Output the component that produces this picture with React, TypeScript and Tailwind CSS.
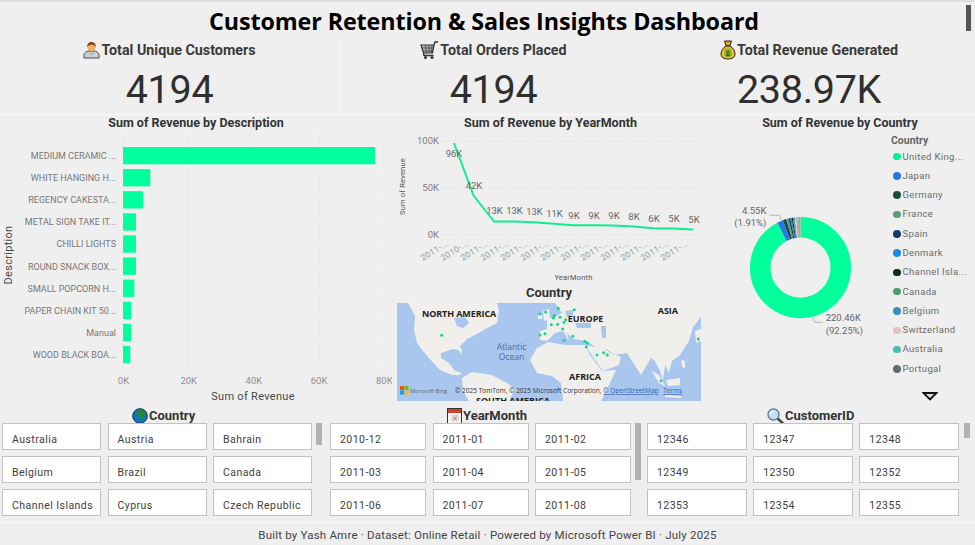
const din = "font-['Roboto',sans-serif]";

function PersonIcon() {
  return (
    <svg width="17" height="18" viewBox="0 0 18 19" className="shrink-0">
      <path d="M1 18v-3c0-3 3-4 5-4.500h6c2 .5 5 1.500 5 4.500v3z" fill="#c9ced3" stroke="#444" strokeWidth="1" />
      <path d="M7 11l2 3 2-3z" fill="#fff" stroke="#555" strokeWidth=".6" />
      <circle cx="9" cy="6.500" r="4" fill="#f2b060" />
      <path d="M4.500 7C4 2.500 6.500 1 9 1s5 1.500 4.500 6c-.8-2-2-3-4.500-3S5.300 5 4.500 7z" fill="#8a4a12" />
    </svg>
  );
}

function CartIcon() {
  return (
    <svg width="19" height="19" viewBox="0 0 19 19" className="shrink-0">
      <path d="M1 4h13l-1.500 8h-9z" fill="#b9bec3" stroke="#333" strokeWidth="1.200" />
      <path d="M2 7h12M2.700 10h10.500M5.500 4l.8 8M9 4v8M12 4l-.5 8" stroke="#333" strokeWidth=".8" />
      <path d="M14 4l1-3h3M3.500 12l.5 2.500h9.500" fill="none" stroke="#333" strokeWidth="1.400" />
      <circle cx="5.500" cy="16.500" r="1.500" fill="#333" />
      <circle cx="12" cy="16.500" r="1.500" fill="#333" />
    </svg>
  );
}

function BagIcon() {
  return (
    <svg width="16" height="20" viewBox="0 0 16 20" className="shrink-0">
      <path d="M4.500 1h7L10 5.500H6z" fill="#f0a818" stroke="#222" strokeWidth="1" />
      <path d="M6 6h4c3 1.500 5 5 5 8 0 3.500-3 5-7 5s-7-1.500-7-5c0-3 2-6.500 5-8z" fill="#f5b921" stroke="#222" strokeWidth="1" />
      <rect x="4.500" y="8.500" width="7" height="8.500" rx="1.500" fill="#7fb83a" />
      <text x="8" y="15.500" textAnchor="middle" fontSize="7.500" fontWeight="700" fill="#24491a" fontFamily="Roboto, sans-serif">$</text>
    </svg>
  );
}

function GlobeIcon() {
  return (
    <svg width="16" height="16" viewBox="0 0 16 16" className="shrink-0">
      <circle cx="8" cy="8" r="7.300" fill="#1672c4" stroke="#0c2f4f" strokeWidth="1" />
      <path d="M6 1.500c3-1 6 .5 7.500 3 .8 2-.5 4-2.500 5-.5 1.500-1.500 2.500-2.500 3-.5-1.500-.5-3-1.500-4-2-.2-3-1.500-2.500-3 .5-1 1.500-1.500 1.500-4z" fill="#1f8a3c" />
    </svg>
  );
}

function CalendarIcon() {
  return (
    <svg width="15" height="16" viewBox="0 0 15 16" className="shrink-0">
      <rect x=".5" y=".5" width="14" height="15" fill="#f4f2f0" stroke="#333" strokeWidth="1" />
      <rect x="1" y="1" width="13" height="4" fill="#c8432f" />
      <path d="M4 8h8M4 10h8M4 12h8M6.500 7v6.500M9.500 7v6.500" stroke="#bbb" strokeWidth=".7" />
      <rect x="7" y="9.500" width="2" height="2" fill="#d9776a" />
    </svg>
  );
}

function SearchIcon() {
  return (
    <svg width="17" height="16" viewBox="0 0 17 16" className="shrink-0">
      <path d="M10 10l5.500 5" stroke="#444" strokeWidth="2.400" strokeLinecap="round" />
      <circle cx="6.500" cy="6.500" r="5.500" fill="#bfe0f5" stroke="#6a7f8f" strokeWidth="1.400" />
      <path d="M3.500 6c0-1.500 1.200-2.700 2.700-2.700" fill="none" stroke="#fff" strokeWidth="1.200" />
    </svg>
  );
}

function Kpi({ icon, label, value, width }: { icon: React.ReactNode; label: string; value: string; width: string }) {
  return (
    <div className={"flex flex-col items-center " + width}>
      <div className="flex h-[20px] items-center gap-[1px]">
        {icon}
        <span className="text-[14.300px] leading-[20px] font-bold text-[#3a3a3a]">{label}</span>
      </div>
      <div className="mt-[6px] text-[39.500px] leading-[48px] tracking-[-0.3px] text-[#2f2f2f]">{value}</div>
    </div>
  );
}

const bars = [
  { label: "MEDIUM CERAMIC ...", value: 252 },
  { label: "WHITE HANGING H...", value: 27.3 },
  { label: "REGENCY CAKESTA...", value: 20 },
  { label: "METAL SIGN TAKE IT...", value: 13 },
  { label: "CHILLI LIGHTS", value: 13 },
  { label: "ROUND SNACK BOX...", value: 13 },
  { label: "SMALL POPCORN H...", value: 11.3 },
  { label: "PAPER CHAIN KIT 50...", value: 8.3 },
  { label: "Manual", value: 8.3 },
  { label: "WOOD BLACK BOA...", value: 7.3 },
];

function BarChart() {
  return (
    <svg width="392" height="276" viewBox="0 0 392 276" fontFamily="Roboto, sans-serif">
      {[123, 188.5, 253.5, 319, 384].map((x) => (
        <line key={x} x1={x} x2={x} y1="5" y2="239" stroke="#dcdcdc" strokeDasharray="1 2" />
      ))}
      {bars.map((b, i) => (
        <g key={b.label}>
          <rect x="123" y={18 + i * 22.1} width={b.value} height="17.300" fill="#01ff9c" />
          <text x="116" y={30 + i * 22.1} textAnchor="end" fontSize="9" fill="#777">{b.label}</text>
        </g>
      ))}
      {["0K", "20K", "40K", "60K", "80K"].map((t, i) => (
        <text key={t} x={123.500 + i * 65.2} y="255" textAnchor="middle" fontSize="9.500" fill="#8f8f8f">{t}</text>
      ))}
      <text x="253" y="270.500" textAnchor="middle" fontSize="11" letterSpacing=".3" fill="#4a4a4a">Sum of Revenue</text>
      <text transform="translate(12 126) rotate(-90)" textAnchor="middle" fontSize="11" letterSpacing=".3" fill="#4a4a4a">Description</text>
    </svg>
  );
}

const linePts = [
  [64, 32.500], [83.500, 85], [104, 111], [124, 111], [144, 111.700], [164, 113.300], [183.300, 114.700],
  [203.300, 114.700], [223.300, 115], [243.300, 116], [263.300, 117.700], [283.300, 118], [303.300, 119],
];
const lineLabels: [string, number, number][] = [
  ["96K", 64, 46.500], ["42K", 84, 78], ["13K", 104.500, 103.500], ["13K", 124.500, 103.500], ["13K", 144.500, 104.500],
  ["11K", 164.500, 106], ["9K", 184, 108], ["9K", 204, 108], ["9K", 224, 108], ["8K", 244, 109],
  ["6K", 264, 111], ["5K", 284, 111], ["5K", 304, 112],
];

function LineChart() {
  return (
    <svg width="316" height="155" viewBox="0 0 316 155" fontFamily="Roboto, sans-serif" className="overflow-visible">
      <g transform="translate(-2 -18.500)">
        {[30.700, 77.300, 124].map((y) => (
          <line key={y} x1="50" x2="310" y1={y} y2={y} stroke="#d8d8d8" strokeDasharray="1 2" />
        ))}
        {[["100K", 33.500], ["50K", 80], ["0K", 127]].map(([t, y]) => (
          <text key={t} x="49" y={y} textAnchor="end" fontSize="9.500" fill="#7d7d7d">{t}</text>
        ))}
        <polyline points={linePts.map((p) => p.join(",")).join(" ")} fill="none" stroke="#12ec90" strokeWidth="2" strokeLinejoin="round" />
        {lineLabels.map(([t, x, y], i) => (
          <text key={i} x={x} y={y} textAnchor="middle" fontSize="9.500" fill="#666">{t}</text>
        ))}
        {["2011-...", "2010-...", "2011-...", "2011-...", "2011-...", "2011-...", "2011-...", "2011-...", "2011-...", "2011-...", "2011-...", "2011-...", "2011-..."].map((t, i) => (
          <text key={i} transform={`translate(${46 + i * 20} 142.500) rotate(-32)`} textAnchor="middle" fontSize="8.500" letterSpacing=".3" fill="#9a9a9a">{t}</text>
        ))}
        <text x="183.500" y="169" textAnchor="middle" fontSize="7.500" letterSpacing=".2" fill="#555">YearMonth</text>
        <text transform="translate(15 76) rotate(-90)" textAnchor="middle" fontSize="7.500" letterSpacing=".2" fill="#555">Sum of Revenue</text>
      </g>
    </svg>
  );
}

const pins = [
  [143, 11], [148.7, 9], [161.3, 5.3], [177.3, 6.7], [156.3, 15], [157.3, 12.7], [163, 14.3], [168.7, 16.7], [167, 19.3],
  [154.3, 21.7], [160.7, 21.3], [165.7, 26], [143, 32], [148, 30.7], [167, 37.3], [175.7, 33.3], [187.7, 38.3], [190.3, 40],
  [189.3, 44], [200, 52], [206.7, 49.7], [210.3, 52], [44.7, 32.3], [301.3, 36], [264, 77.7],
];

function WorldMap() {
  const land = "#f0efeb";
  const water = "#a9c6ee";
  return (
    <svg width="304" height="98" viewBox="0 0 304 98" className="block" fontFamily="'Open Sans', sans-serif">
      <rect width="304" height="98" fill={water} />
      {/* north america */}
      <path d="M11 0H100L102 8L100 20L88 26L82 30L70 36L63 43L65 47L64 52L62 47L56 46L50 48L44 50L44 55L52 60L58 68L65 70L62 72L55 72L43 67L30 53L20 40L17 27L18 13Z" fill={land} />
      <path d="M57 15L68 14L72 20L66 25L60 23Z" fill={water} />
      {/* south america */}
      <path d="M65 75L75 69L95 72L110 80L118 86L112 98H72L66 88Z" fill={land} />
      {/* europe and asia */}
      <path d="M158 0H304V14L296 24L292 38L283 52L275 58L272 70L268 62L266 76L268 84L263 68L258 58L254 55L244 72L235 58L230 50L218 52L209 46L204 48L190 38L176 36L170 30L172 38L166 28L158 30L150 38L143 37L143 28L150 26L150 16L158 14L165 10Z" fill={land} />
      <path d="M146 8L152 6L153 16L147 18Z" fill={land} />
      <path d="M141 12L145 11L145 16L141 16Z" fill={land} />
      {/* inland seas */}
      <path d="M168 8L176 7L176 14L170 14Z" fill={water} />
      <path d="M178 20L194 20L194 25L180 25Z" fill={water} />
      <path d="M204 23L209 23L209 35L205 35Z" fill={water} />
      {/* africa */}
      <path d="M133 57L140 45L151 39L168 42L188 42L193 52L205 68L219 67L212 82L204 98H166L164 80L155 73L140 70Z" fill={land} />
      {/* arabia */}
      <path d="M188 42L208 46L213 50L224 54L222 62L206 68L196 54Z" fill={land} />
      {/* islands */}
      <path d="M254 67L262 72L268 83L262 80Z" fill={land} />
      <path d="M269 77L283 75L283 82L271 83Z" fill={land} />
      <path d="M268 92L284 93L284 95L268 94Z" fill={land} />
      <path d="M284 57L288 58L288 65L285 64Z" fill={land} />
      <path d="M298 28L304 26V38L299 40Z" fill={land} />
      <text x="25" y="13.500" fontSize="9" fontWeight="700" letterSpacing="-.1" fill="#222">NORTH AMERICA</text>
      <text x="170.700" y="18.500" fontSize="9" fontWeight="700" fill="#222">EUROPE</text>
      <text x="260.700" y="10.700" fontSize="9" fontWeight="700" fill="#222">ASIA</text>
      <text x="172" y="76.700" fontSize="9" fontWeight="700" fill="#222">AFRICA</text>
      <text x="79" y="100.500" fontSize="9" fontWeight="700" fill="#222">SOUTH AMERICA</text>
      <text x="114.500" y="47" textAnchor="middle" fontSize="8.500" fill="#4b6e9e">Atlantic</text>
      <text x="114.500" y="57" textAnchor="middle" fontSize="8.500" fill="#4b6e9e">Ocean</text>
      {pins.map(([x, y], i) => (
        <circle key={i} cx={x} cy={y} r="1.500" fill="#12d48c" />
      ))}
      <rect x="3" y="83" width="4" height="4" fill="#f25022" />
      <rect x="7.500" y="83" width="4" height="4" fill="#7fba00" />
      <rect x="3" y="87.500" width="4" height="4" fill="#00a4ef" />
      <rect x="7.500" y="87.500" width="4" height="4" fill="#ffb900" />
      <text x="13" y="90" fontSize="5.500" fill="#666">Microsoft Bing</text>
      <text x="58" y="90" fontSize="6.500" fill="#333">© 2025 TomTom, © 2025 Microsoft Corporation, <tspan fill="#3a5fa8" textDecoration="underline">© OpenStreetMap</tspan> <tspan dx="3" fill="#3a5fa8" textDecoration="underline">Terms</tspan></text>
    </svg>
  );
}

const slices = [
  { pct: 92.25, color: "#01ff9c" },
  { pct: 1.91, color: "#2a76e8" },
  { pct: 1.1, color: "#1b4a46" },
  { pct: 0.75, color: "#5c9e78" },
  { pct: 0.55, color: "#123a6e" },
  { pct: 0.45, color: "#1e88e5" },
  { pct: 0.4, color: "#0d2b22" },
  { pct: 0.3, color: "#4f9c6c" },
  { pct: 0.3, color: "#3a8fb5" },
  { pct: 0.5, color: "#e0c2c6" },
  { pct: 0.3, color: "#4fbcb0" },
  { pct: 1.19, color: "#a9a9a9" },
];

function Donut() {
  const r = 40.3;
  const c = 2 * Math.PI * r;
  let acc = 0;
  return (
    <svg width="178" height="276" viewBox="0 0 178 276" fontFamily="Roboto, sans-serif">
      <g transform="rotate(-90 85.500 138.600)">
        {slices.map((s) => {
          const dash = (s.pct / 100) * c;
          const el = (
            <circle key={s.color} cx="85.500" cy="138.600" r={r} fill="none" stroke={s.color} strokeWidth="20.500"
              strokeDasharray={`${dash} ${c - dash}`} strokeDashoffset={-acc} />
          );
          acc += dash;
          return el;
        })}
      </g>
      <path d="M54.700 86.300H64.700L66.400 91.300" fill="none" stroke="#aaa" strokeWidth=".8" />
      <path d="M97.700 188.300L99.700 193.300H107.700" fill="none" stroke="#aaa" strokeWidth=".8" />
      <text x="51.400" y="84.800" textAnchor="end" fontSize="9.500" fill="#666">4.55K</text>
      <text x="51.400" y="96.800" textAnchor="end" fontSize="9.500" fill="#666">(1.91%)</text>
      <text x="110.700" y="191.500" fontSize="9.500" fill="#666">220.46K</text>
      <text x="110.700" y="204.500" fontSize="9.500" fill="#666">(92.25%)</text>
    </svg>
  );
}

const legend = [
  ["United King...", "#01f197"],
  ["Japan", "#2a76e8"],
  ["Germany", "#1b4a46"],
  ["France", "#5c9e78"],
  ["Spain", "#123a6e"],
  ["Denmark", "#1e88e5"],
  ["Channel Isla...", "#0d2b22"],
  ["Canada", "#4f9c6c"],
  ["Belgium", "#3a8fb5"],
  ["Switzerland", "#e0c2c6"],
  ["Australia", "#4fbcb0"],
  ["Portugal", "#5f6b6b"],
];

function Slicer({ icon, title, items, thumb, width, boxes, titleMl }: {
  icon: React.ReactNode; title: string; items: string[]; thumb: string; width: string; boxes: string; titleMl: string;
}) {
  return (
    <div className={"flex flex-col " + width}>
      <div className={"flex h-[18px] items-center gap-[1px] pt-[3px] " + titleMl}>
        {icon}
        <span className="text-[13px] leading-[18px] font-bold text-[#333]">{title}</span>
      </div>
      <div className="flex">
        <div className={"grid grid-cols-3 gap-y-[6px] " + boxes}>
          {items.map((t) => (
            <div key={t} className="flex h-[27px] items-center border border-[#c2c2c2] bg-white pt-[6px] pl-[9px] text-[10.500px] tracking-[0.45px] whitespace-nowrap text-[#3d3d3d]">
              {t}
            </div>
          ))}
        </div>
        <div className={"ml-[4px] w-[6px] bg-[#b3b2b0] " + thumb} />
      </div>
    </div>
  );
}

export default function App() {
  return (
    <div className={"relative flex h-[545px] w-[975px] flex-col overflow-hidden bg-[#efefef] " + din}>
      <div className="h-[2px] bg-[#dedede]" />
      {/* title */}
      <div className="flex h-[34px] items-center justify-center pt-[4px]">
        <h1 className="ml-[-7px] font-['Open_Sans',sans-serif] text-[23.300px] leading-[30px] font-bold tracking-[-0.1px] text-black">
          Customer Retention &amp; Sales Insights Dashboard
        </h1>
      </div>
      <div className="absolute top-[5px] right-[4px] h-[26px] w-[5px] bg-[#555]" />
      {/* kpi row */}
      <div className="flex h-[78px] pt-[4px]">
        <Kpi icon={<PersonIcon />} label="Total Unique Customers" value="4194" width="w-[340px] border-r border-[#f4f4f4]" />
        <Kpi icon={<CartIcon />} label="Total Orders Placed" value="4194" width="w-[307px]" />
        <Kpi icon={<BagIcon />} label="Total Revenue Generated" value="238.97K" width="w-[324px]" />
      </div>
      <div className="h-[1px] bg-[#fafafa]" />
      {/* charts */}
      <div className="flex h-[290px]">
        <div className="flex w-[392px] flex-col">
          <div className="h-[14px] pt-[1px] text-center text-[12.500px] leading-[14px] font-bold text-[#333]">Sum of Revenue by Description</div>
          <BarChart />
        </div>
        <div className="ml-[5px] flex w-[316px] flex-col">
          <div className="ml-[-9px] h-[14px] pt-[1px] text-center text-[12.500px] leading-[14px] font-bold text-[#333]">Sum of Revenue by YearMonth</div>
          <div className="ml-[-5px] h-[155px]">
            <LineChart />
          </div>
          <div className="ml-[-12px] h-[19px] text-center text-[13px] leading-[17px] font-bold text-[#333]">Country</div>
          <WorldMap />
        </div>
        <div className="flex flex-1 flex-col">
          <div className="ml-[-8px] h-[14px] pt-[1px] text-center text-[12.500px] leading-[14px] font-bold text-[#333]">Sum of Revenue by Country</div>
          <div className="flex">
            <div className="ml-[2px] w-[178px]">
              <Donut />
            </div>
            <div className="relative flex flex-col pt-[5px]">
              <div className="ml-[-2px] h-[13px] text-[10.500px] leading-[13px] font-bold text-[#666]">Country</div>
              <div className="flex flex-col">
                {legend.map(([name, color]) => (
                  <div key={name} className="flex h-[19.300px] items-center gap-[2px] text-[9.500px] tracking-[0.35px] whitespace-nowrap text-[#6b6b6b]">
                    <span className="size-[7.500px] rounded-full" style={{ backgroundColor: color }} />
                    {name}
                  </div>
                ))}
              </div>
              <svg width="16" height="9" viewBox="0 0 16 9" className="absolute top-[263px] left-[29px]">
                <path d="M1.500 1h13L8 7.500z" fill="#dcdcdc" stroke="#111" strokeWidth="1.800" />
              </svg>
            </div>
          </div>
        </div>
      </div>
      {/* slicers */}
      <div className="flex h-[117px] pl-[2px]">
        <Slicer icon={<GlobeIcon />} title="Country" width="w-[328px]" boxes="w-[310px] gap-x-[6.500px]" thumb="h-[22px]" titleMl="ml-[130px]"
          items={["Australia", "Austria", "Bahrain", "Belgium", "Brazil", "Canada", "Channel Islands", "Cyprus", "Czech Republic"]} />
        <Slicer icon={<CalendarIcon />} title="YearMonth" width="w-[317px]" boxes="w-[301px] gap-x-[6.500px]" thumb="h-[57px]" titleMl="ml-[117px]"
          items={["2010-12", "2011-01", "2011-02", "2011-03", "2011-04", "2011-05", "2011-06", "2011-07", "2011-08"]} />
        <Slicer icon={<SearchIcon />} title="CustomerID" width="w-[326px]" boxes="w-[312px] gap-x-[6.500px]" thumb="h-[15px] ml-[5px]" titleMl="ml-[120px]"
          items={["12346", "12347", "12348", "12349", "12350", "12352", "12353", "12354", "12355"]} />
      </div>
      <div className="h-[1px] bg-[#fafafa]" />
      {/* footer */}
      <div className="flex flex-1 items-center justify-center pt-[4px] text-[11.500px] tracking-[0.2px] text-[#444]">
        Built by Yash Amre · Dataset: Online Retail · Powered by Microsoft Power BI · July 2025
      </div>
    </div>
  );
}
